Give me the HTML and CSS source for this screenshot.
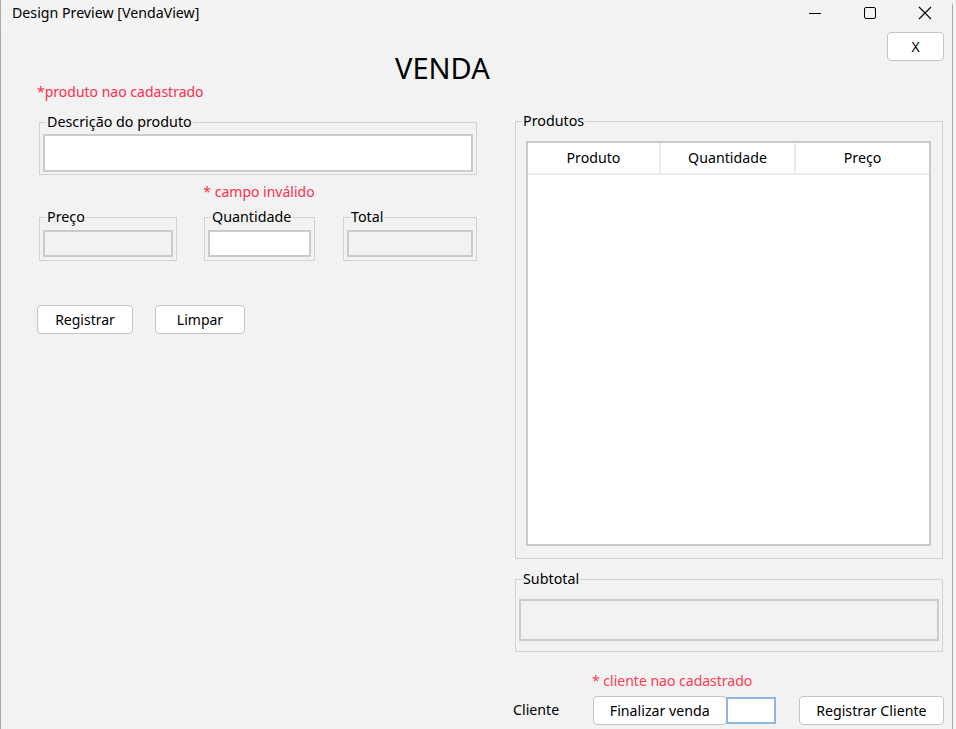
FILE: index.html
```html
<!DOCTYPE html>
<html lang="pt">
<head>
<meta charset="utf-8">
<title>Design Preview [VendaView]</title>
<link rel="stylesheet" href="styles.css">
</head>
<body>
<div class="window">
  <header class="titlebar">
    <span class="title">Design Preview [VendaView]</span>
    <div class="controls">
      <span class="ctl ctl-min"><svg width="14" height="14" viewBox="0 0 14 14"><path d="M1 7.5h12" stroke="#000" stroke-width="1" fill="none"/></svg></span>
      <span class="ctl ctl-max"><svg width="14" height="14" viewBox="0 0 14 14"><rect x="1.5" y="1.5" width="11" height="11" rx="1.5" stroke="#000" stroke-width="1" fill="none"/></svg></span>
      <span class="ctl ctl-close"><svg width="14" height="14" viewBox="0 0 14 14"><path d="M1 1L13 13M13 1L1 13" stroke="#000" stroke-width="1.1" fill="none"/></svg></span>
    </div>
  </header>

  <div class="top">
    <h1 class="heading">VENDA</h1>
    <button class="btn btn-x" type="button">X</button>
  </div>

  <main class="main">
    <section class="left">
      <p class="error">*produto nao cadastrado</p>
      <fieldset class="group g-desc">
        <legend>Descrição do produto</legend>
        <div class="group-body body-desc"><div class="field field-white field-desc"></div></div>
      </fieldset>
      <p class="error error-center">* campo inválido</p>
      <div class="row3">
        <fieldset class="group g-preco">
          <legend>Preço</legend>
          <div class="group-body body-small"><div class="field field-grey field-small"></div></div>
        </fieldset>
        <fieldset class="group g-qtd">
          <legend>Quantidade</legend>
          <div class="group-body body-small"><div class="field field-white field-small"></div></div>
        </fieldset>
        <fieldset class="group g-total">
          <legend>Total</legend>
          <div class="group-body body-small"><div class="field field-grey field-small"></div></div>
        </fieldset>
      </div>
      <div class="actions">
        <button class="btn btn-registrar" type="button">Registrar</button>
        <button class="btn btn-limpar" type="button">Limpar</button>
      </div>
    </section>

    <section class="right">
      <fieldset class="group g-produtos">
        <legend>Produtos</legend>
        <div class="group-body body-produtos">
          <div class="table">
            <div class="thead">
              <div class="th th-1">Produto</div>
              <div class="th th-2">Quantidade</div>
              <div class="th th-3">Preço</div>
            </div>
            <div class="tbody"></div>
          </div>
        </div>
      </fieldset>
      <fieldset class="group g-subtotal">
        <legend>Subtotal</legend>
        <div class="group-body body-subtotal"><div class="field field-grey field-subtotal"></div></div>
      </fieldset>
      <p class="error error-cliente">* cliente nao cadastrado</p>
      <div class="bottom-row">
        <span class="label-cliente">Cliente</span>
        <button class="btn btn-finalizar" type="button">Finalizar venda</button>
        <div class="field-cliente"></div>
        <button class="btn btn-reg-cliente" type="button">Registrar Cliente</button>
      </div>
    </section>
  </main>
</div>
</body>
</html>
```

FILE: styles.css
```css
* { box-sizing: border-box; }

html, body {
  margin: 0;
  padding: 0;
  background: #f4f4f4;
}

body {
  font-family: "Noto Sans", "Open Sans", sans-serif;
  font-size: 14px;
  color: #000;
  width: 956px;
  height: 729px;
  overflow: hidden;
}

.window {
  width: 953px;
  height: 729px;
  background: #f2f2f2;
  border-left: 1px solid #a9a9a9;
  border-right: 1px solid #a9a9a9;
  border-top-right-radius: 6px;
  display: flex;
  flex-direction: column;
}

/* title bar */
.titlebar {
  height: 30px;
  display: flex;
  align-items: flex-start;
  justify-content: space-between;
  background: #f3f3f3;
}
.title {
  font-size: 14.2px;
  line-height: 16px;
  margin: 5px 0 0 11px;
}
.controls {
  display: flex;
  margin-top: 6px;
}
.ctl {
  display: block;
  width: 14px;
  height: 14px;
}
.ctl svg { display: block; }
.ctl-min { margin-right: 41px; }
.ctl-max { margin-right: 41px; }
.ctl-close { margin-right: 20px; }

/* header row */
.top {
  height: 52px;
  display: flex;
  align-items: flex-start;
  justify-content: space-between;
}
.heading {
  margin: 25px 0 0 394px;
  font-weight: normal;
  font-size: 29px;
  line-height: 26px;
}
.btn {
  font-family: inherit;
  font-size: 14px;
  color: #000;
  background: #fff;
  border: 1px solid #c4c4c4;
  border-radius: 4px;
  padding: 0;
  line-height: 18px;
}
.btn-x {
  width: 57px;
  height: 29px;
  margin: 2px 8px 0 0;
}

/* main */
.main {
  display: flex;
  padding-left: 36px;
}
.left {
  width: 440px;
}
.right {
  width: 431px;
  margin-left: 36px;
  padding-top: 31px;
}

.error {
  margin: 0;
  font-size: 14px;
  line-height: 18px;
  color: #ff2d50;
}
.error:first-child { padding-top: 1px; }
.error-center {
  text-align: center;
  margin-top: 8px;
  padding-left: 4px;
}
.error-cliente {
  margin-top: 20px;
  margin-left: 79px;
  color: #ff3a52;
}

/* group boxes */
.group {
  margin: 0 0 0 2px;
  padding: 0;
  border: 1px solid #d3d3d3;
  min-width: 0;
}
.group legend {
  margin-left: 6px;
  padding: 0 1px;
  font-size: 14.3px;
  line-height: 16px;
}
.g-desc { width: 438px; margin-top: 13px; }
.body-desc { padding: 4px 3px 2px 3px; }

.field {
  border: 2px solid #cbcbcb;
}
.field-white { background: #fff; }
.field-grey { background: #f2f2f2; }
.field-desc { height: 38px; }

.row3 {
  display: flex;
  margin-top: 8px;
}
.g-preco { width: 138px; }
.g-qtd { width: 111px; margin-left: 27px; }
.g-total { width: 134px; margin-left: 28px; }
.body-small { padding: 5px 3px 3px 3px; }
.field-small { height: 27px; }

.actions {
  display: flex;
  margin-top: 44px;
  gap: 22px;
}
.btn-registrar { width: 96px; height: 29px; }
.btn-limpar { width: 90px; height: 29px; }

/* table */
.g-produtos { width: 428px; }
.body-produtos { padding: 12px 10px 12px 10px; }
.table {
  width: 405px;
  height: 405px;
  background: #fff;
  border: 2px solid #cacaca;
  display: flex;
  flex-direction: column;
}
.thead {
  display: grid;
  grid-template-columns: 133px 135px 1fr;
  height: 32px;
  border-bottom: 2px solid #ebebeb;
}
.th {
  display: flex;
  align-items: center;
  justify-content: center;
  font-size: 14.2px;
  padding-bottom: 1px;
}
.th-1, .th-2 { border-right: 2px solid #ebebeb; }
.tbody { flex: 1; }

.g-subtotal { width: 428px; margin-top: 12px; }
.body-subtotal { padding: 12px 3px 10px 3px; }
.field-subtotal { height: 42px; }

/* bottom row */
.bottom-row {
  display: flex;
  align-items: center;
  margin-top: 6px;
  height: 29px;
}
.label-cliente {
  font-size: 14.2px;
  width: 80px;
  padding-bottom: 2px;
}
.btn-finalizar {
  width: 135px;
  height: 29px;
  font-size: 14.2px;
}
.field-cliente {
  width: 50px;
  height: 27px;
  margin-left: -1px;
  background: #fff;
  border: 2px solid #8fb6e2;
}
.btn-reg-cliente {
  width: 146px;
  height: 29px;
  margin-left: 23px;
  font-size: 14.2px;
}
```
